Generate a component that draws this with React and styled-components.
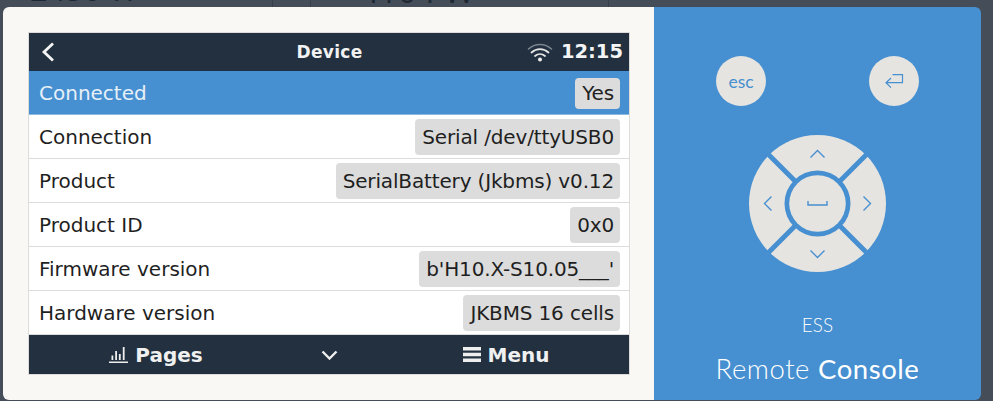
import React from 'react';
import styled, { createGlobalStyle } from 'styled-components';

const Global = createGlobalStyle`
  html, body { margin: 0; padding: 0; background: #454d59; overflow: hidden; }
  * { box-sizing: border-box; }
`;
const Page = styled.div`
  position: relative; width: 993px; height: 401px; overflow: hidden; background: #454d59;
  padding: 7px 12px 0 3px;
`;
const BackValue = styled.div`
  position: absolute; top: -32px; font: ${p => p.$size}px "Open Sans", sans-serif; color: #1e2833; white-space: nowrap;
  left: ${p => p.$left}px;
`;
const BackLine = styled.div`
  position: absolute; top: 0; width: 1px; height: 7px; background: #383f4a; left: ${p => p.$left}px;
`;
const Shell = styled.div`
  position: relative; display: flex; width: 978px; height: 393px; border-radius: 6px; overflow: hidden;
`;
const Left = styled.div`
  width: 651px; background: #faf8f4; padding: 26px 0 0 26px;
`;
const Screen = styled.div`
  width: 600px; display: flex; flex-direction: column; font-family: "DejaVu Sans", sans-serif;
  outline: 1px solid #dedcd8;
`;
const Header = styled.div`
  height: 38px; background: #22303f; color: #fff; display: grid; grid-template-columns: 1fr auto 1fr; align-items: center;
  padding: 0 6px 0 7px; border-bottom: 1px solid #1c3048;
`;
const Back = styled.svg`display: block; margin-left: 5px;`;
const HeaderTitle = styled.div`font-weight: 700; font-size: 17px; letter-spacing: .3px; color: #f2f2f2;`;
const HeaderRight = styled.div`display: flex; justify-content: flex-end; align-items: center; gap: 8px;`;
const Clock = styled.span`font-weight: 700; font-size: 19.5px; color: #f4f4f4;`;
const Row = styled.div`
  height: 44px; display: flex; justify-content: space-between; align-items: center;
  padding: ${p => p.$active ? 1 : 0}px 9px 0 10px; font-size: 20px; border-bottom: 1px solid ${p => p.$active ? '#8db9e0' : '#dcdcdc'};
  background: ${p => p.$active ? '#468fd0' : '#fff'};
  color: ${p => p.$active ? '#e6f0f8' : '#1f1f1f'};
`;
const Value = styled.span`
  height: ${p => p.$active ? 31 : 36}px; padding: 0 6px 0 7px; background: #dcdcdc; border-radius: 4px; display: flex; align-items: center;
  color: #1f1f1f; font-size: 20px; letter-spacing: -.15px; white-space: nowrap;
`;
const Footer = styled.div`
  height: 39px; background: #22303f; color: #f0f0f0; display: flex; align-items: center; font-weight: 700; font-size: 20px;
`;
const FooterItem = styled.div`
  flex: ${p => p.$w ? `0 0 ${p.$w}px` : '1'}; display: flex; justify-content: center; align-items: center; gap: 7px;
  padding-left: ${p => p.$shift || 0}px;
`;
const Right = styled.div`
  flex: 1; background: #468fd0; display: flex; flex-direction: column; align-items: center; color: #fff;
  font-family: Lato, sans-serif; padding-top: 49px;
`;
const TopKeys = styled.div`display: flex; width: 203px; justify-content: space-between;`;
const RoundKey = styled.div`
  width: 50px; height: 50px; border-radius: 50%; background: #e5e4e0; color: #468fd0; display: flex; align-items: center; justify-content: center;
  font-size: 17.5px; font-weight: 400;
`;
const Pad = styled.svg`display: block; margin-top: 29px;`;
const Ess = styled.div`font-size: 19px; font-weight: 300; margin-top: 41px;`;
const Brand = styled.div`font-size: 27.5px; font-weight: 300; margin-top: 16px; letter-spacing: .55px;`;
const Strong = styled.span`font-weight: 400;`;

const rows = [
  ['Connected', 'Yes', true],
  ['Connection', 'Serial /dev/ttyUSB0'],
  ['Product', 'SerialBattery (Jkbms) v0.12'],
  ['Product ID', '0x0'],
  ['Firmware version', "b'H10.X-S10.05___'"],
  ['Hardware version', 'JKBMS 16 cells'],
];

export default function App() {
  return (
    <Page>
      <Global />
      <BackValue $left={30} $size={31}>2456 W</BackValue>
      <BackValue $left={360} $size={33}>4104 W</BackValue>
      <BackLine $left={272} />
      <BackLine $left={310} />
      <BackLine $left={608} />
      <Shell>
        <Left>
          <Screen>
            <Header>
              <Back width="16" height="20" viewBox="0 0 16 20" fill="none" stroke="#f4f4f4" strokeWidth="2.800"><path d="M12 1.500 3 10l9 8.500" /></Back>
              <HeaderTitle>Device</HeaderTitle>
              <HeaderRight>
                <svg width="26" height="20" viewBox="0 0 26 20" fill="none" strokeLinecap="round">
                  <path d="M1.500 7C8 1 18 1 24.500 7" stroke="#7b8590" strokeWidth="1.600" />
                  <path d="M4.500 10.500C9.500 6 16.500 6 21.500 10.500" stroke="#e6e6e6" strokeWidth="1.800" />
                  <path d="M8 14c3-2.600 7-2.600 10 0" stroke="#e6e6e6" strokeWidth="1.800" />
                  <circle cx="13" cy="17.500" r="2" fill="#eee" />
                </svg>
                <Clock>12:15</Clock>
              </HeaderRight>
            </Header>
            {rows.map(([k, v, a]) => (
              <Row key={k} $active={a}><span>{k}</span><Value $active={a}>{v}</Value></Row>
            ))}
            <Footer>
              <FooterItem $w={254}>
                <svg width="19" height="16" viewBox="0 0 19 16" fill="#eee"><path d="M0 14.500h19V16H0zM2.500 8.500h1.800v4.500H2.500zM6.200 4h1.800v9H6.200zM9.900 7h1.800v6H9.900zM13.800 0h1.800v13h-1.800z" /></svg>
                Pages
              </FooterItem>
              <FooterItem $w={92}>
                <svg width="17" height="10" viewBox="0 0 17 10" fill="none" stroke="#eee" strokeWidth="2.400"><path d="m1.500 1.500 7 7 7-7" /></svg>
              </FooterItem>
              <FooterItem $shift={8}>
                <svg width="18" height="15" viewBox="0 0 18 15" fill="#eee"><path d="M0 0h18v3.400H0zM0 5.800h18v3.400H0zM0 11.600h18V15H0z" /></svg>
                Menu
              </FooterItem>
            </Footer>
          </Screen>
        </Left>
        <Right>
          <TopKeys>
            <RoundKey>esc</RoundKey>
            <RoundKey>
              <svg width="20" height="16" viewBox="0 0 20 16" fill="none" stroke="#468fd0" strokeWidth="1.200"><path d="M8.500 1.700h10v8H2M7 5 2 9.700l5 5" /></svg>
            </RoundKey>
          </TopKeys>
          <Pad width="137" height="137" viewBox="-68.500 -68.500 137 137">
            <circle r="68.500" fill="#e5e4e0" />
            <path d="M-50-50 50 50M-50 50 50-50" stroke="#468fd0" strokeWidth="4.800" />
            <circle r="33" fill="#468fd0" />
            <circle r="28.300" fill="#e5e4e0" />
            <g fill="none" stroke="#468fd0" strokeWidth="1.400">
              <path d="M-7-46 0-53l7 7" />
              <path d="M-7 47 0 54l7-7" />
              <path d="M-46-7l-7 7 7 7" />
              <path d="M46-7l7 7-7 7" />
              <path d="M-9.500-2.500V1.500H9.500V-2.500" />
            </g>
          </Pad>
          <Ess>ESS</Ess>
          <Brand>Remote <Strong>Console</Strong></Brand>
        </Right>
      </Shell>
    </Page>
  );
}
